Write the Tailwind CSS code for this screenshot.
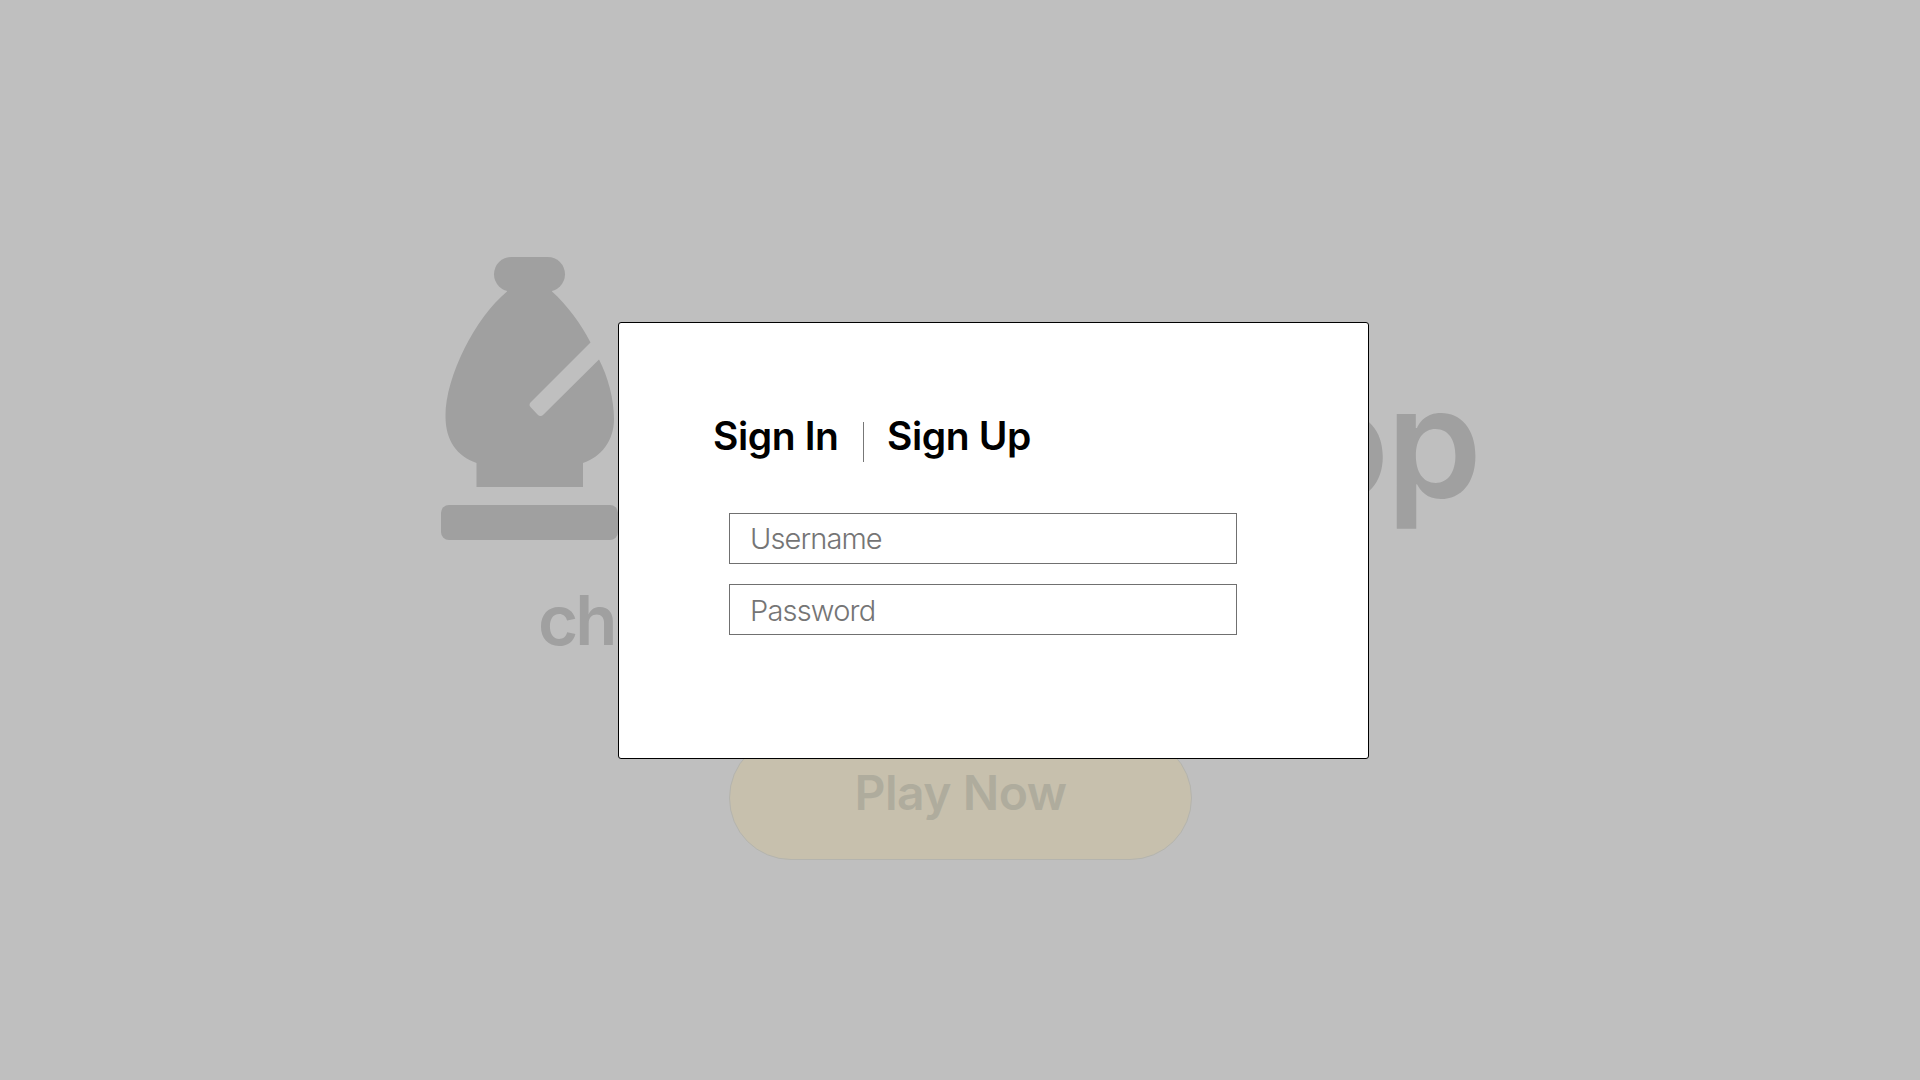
<!DOCTYPE html>
<html lang="en">
<head>
<meta charset="utf-8">
<title>Sign In</title>
<script src="https://cdn.jsdelivr.net/npm/@tailwindcss/browser@4"></script>
</head>
<body class="h-screen overflow-hidden bg-[#bfbfbf] font-['Inter',sans-serif]">
<main class="relative h-full">
  <section class="flex h-full flex-col pt-[257px]">
    <div class="flex h-[283px] items-start justify-between pr-[441px] pl-[441px]">
      <svg class="h-[283px] w-[178px]" viewBox="0 0 178 283" fill="#a0a0a0">
        <rect x="53" y="0" width="71" height="34.5" rx="17.25"/>
        <path d="M66 34.5V30H111V34.5C127 49 140 67 149.500 85.500L89.500 145.500Q87.500 148 89.500 150L96.500 157.500Q99.500 160.500 102.500 157.500L158 102.500C167 120 173 142 173 162C173 184 160 200 142 206V230H35.500V206C16 199 4.500 184 4.500 159C4.500 119 35 60 66 34.500Z"/>
        <rect x="0" y="248" width="177" height="35" rx="8"/>
      </svg>
      <h1 class="mt-[93px] text-[153px] leading-[186px] font-semibold tracking-[-3px] text-[#a0a0a0]">op</h1>
    </div>
    <p class="mt-[40px] pl-[538px] text-[69px] leading-[80px] font-semibold tracking-[-3px] text-[#a0a0a0]">ch</p>
    <button class="mt-[76px] ml-[729px] flex h-[124px] w-[463px] items-center justify-center rounded-full border border-[#b4b4ae] bg-[#c7c0ad] pb-[10px] text-[48px] font-semibold tracking-[-0.5px] text-[#afac9d]">Play Now</button>
  </section>
  <div class="absolute top-[322px] left-[618px] flex h-[437px] w-[751px] flex-col rounded-[3px] border border-black bg-white pt-[88px] pl-[94px]">
    <div class="flex h-[50px] items-center text-[39px] leading-[50px] font-semibold tracking-[-0.4px] text-black">
      <span class="w-[150px] whitespace-nowrap">Sign In</span>
      <span class="mt-[12px] h-[40px] w-px bg-[#777]"></span>
      <span class="ml-[23px] whitespace-nowrap">Sign Up</span>
    </div>
    <form class="mt-[52px] ml-[16px] flex flex-col gap-[20px]">
      <input type="text" placeholder="Username" class="h-[51px] w-[508px] border border-[#707070] px-[20px] text-[29px] font-light tracking-[-0.9px] text-[#757575] placeholder:text-[#757575]">
      <input type="password" placeholder="Password" class="h-[51px] w-[508px] border border-[#707070] px-[20px] pt-[2px] text-[29px] font-light tracking-[-0.8px] text-[#757575] placeholder:text-[#757575]">
    </form>
  </div>
</main>
</body>
</html>
